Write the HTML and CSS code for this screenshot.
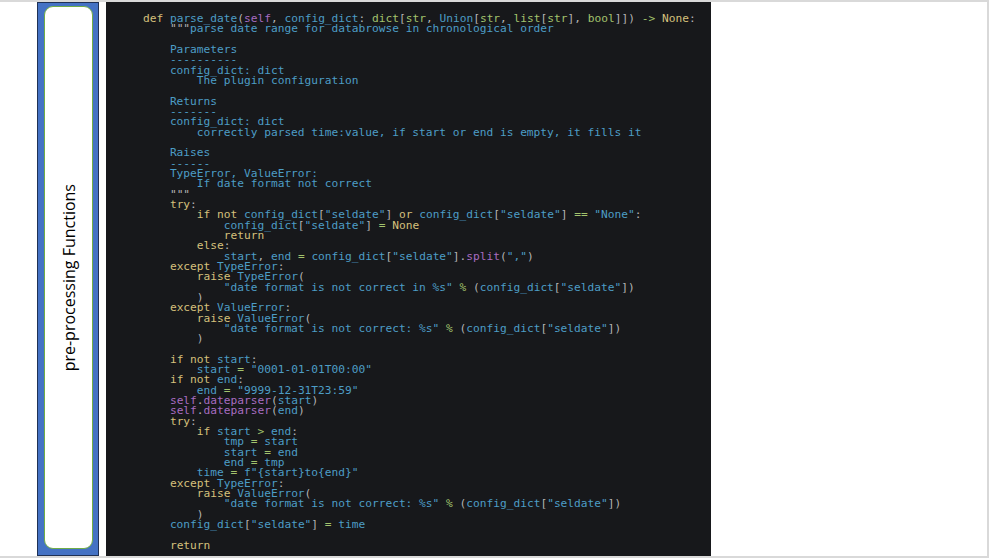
FILE: index.html
```html
<!DOCTYPE html>
<html>
<head>
<meta charset="utf-8">
<link rel="stylesheet" href="styles.css">
</head>
<body>
<div class="slide">
  <div class="side">
    <div class="side-inner">
      <span class="side-label">pre-processing Functions</span>
    </div>
  </div>
  <pre class="code"><code>    <span class="k">def</span> parse_date<span class="p">(</span><span class="s">self</span><span class="p">,</span> config_dict<span class="p">:</span> <span class="g">dict</span><span class="p">[</span><span class="g">str</span><span class="p">,</span> Union<span class="p">[</span><span class="g">str</span><span class="p">,</span> <span class="g">list</span><span class="p">[</span><span class="g">str</span><span class="p">],</span> <span class="g">bool</span><span class="p">]])</span> <span class="g">-&gt;</span> <span class="k">None</span><span class="p">:</span>
        <span class="p">"""</span>parse date range for databrowse in chronological order

        Parameters
        ----------
        config_dict: dict
            The plugin configuration

        Returns
        -------
        config_dict: dict
            correctly parsed time:value, if start or end is empty, it fills it

        Raises
        ------
        TypeError, ValueError:
            If date format not correct
        <span class="p">"""</span>
        <span class="k">try</span><span class="p">:</span>
            <span class="k">if not</span> config_dict<span class="p">[</span>"seldate"<span class="p">]</span> <span class="k">or</span> config_dict<span class="p">[</span>"seldate"<span class="p">]</span> <span class="g">==</span> "None"<span class="p">:</span>
                config_dict<span class="p">[</span>"seldate"<span class="p">]</span> <span class="g">=</span> <span class="k">None</span>
                <span class="k">return</span>
            <span class="k">else</span><span class="p">:</span>
                start<span class="p">,</span> end <span class="g">=</span> config_dict<span class="p">[</span>"seldate"<span class="p">].</span><span class="s">split</span><span class="p">(</span>","<span class="p">)</span>
        <span class="k">except</span> TypeError<span class="p">:</span>
            <span class="k">raise</span> TypeError<span class="p">(</span>
                "date format is not correct in %s" <span class="g">%</span> <span class="p">(</span>config_dict<span class="p">[</span>"seldate"<span class="p">])</span>
            <span class="p">)</span>
        <span class="k">except</span> ValueError<span class="p">:</span>
            <span class="k">raise</span> ValueError<span class="p">(</span>
                "date format is not correct: %s" <span class="g">%</span> <span class="p">(</span>config_dict<span class="p">[</span>"seldate"<span class="p">])</span>
            <span class="p">)</span>

        <span class="k">if not</span> start<span class="p">:</span>
            start <span class="g">=</span> "0001-01-01T00:00"
        <span class="k">if not</span> end<span class="p">:</span>
            end <span class="g">=</span> "9999-12-31T23:59"
        <span class="s">self</span><span class="p">.</span><span class="s">dateparser</span><span class="p">(</span>start<span class="p">)</span>
        <span class="s">self</span><span class="p">.</span><span class="s">dateparser</span><span class="p">(</span>end<span class="p">)</span>
        <span class="k">try</span><span class="p">:</span>
            <span class="k">if</span> start <span class="g">&gt;</span> end<span class="p">:</span>
                tmp <span class="g">=</span> start
                start <span class="g">=</span> end
                end <span class="g">=</span> tmp
            time <span class="g">=</span> f"{start}to{end}"
        <span class="k">except</span> TypeError<span class="p">:</span>
            <span class="k">raise</span> ValueError<span class="p">(</span>
                "date format is not correct: %s" <span class="g">%</span> <span class="p">(</span>config_dict<span class="p">[</span>"seldate"<span class="p">])</span>
            <span class="p">)</span>
        config_dict<span class="p">[</span>"seldate"<span class="p">]</span> <span class="g">=</span> time

        <span class="k">return</span></code></pre>
</div>
</body>
</html>
```

FILE: styles.css
```css
html, body {
  margin: 0;
  padding: 0;
  background: #ffffff;
}

.slide {
  box-sizing: border-box;
  width: 989px;
  height: 558px;
  border-top: 2px solid #d9d9d9;
  border-right: 2px solid #d9d9d9;
  border-bottom: 2px solid #d9d9d9;
  display: flex;
  align-items: stretch;
  padding-left: 37px;
  gap: 7px;
  background: #ffffff;
}

.side {
  box-sizing: border-box;
  width: 62px;
  background: #4472c4;
  border: 1px solid #1f3155;
  padding: 3px 5px 6px 6px;
  display: flex;
}

.side-inner {
  flex: 1;
  background: #ffffff;
  border: 1.5px solid #70ad47;
  border-radius: 9px;
  display: flex;
  align-items: center;
  justify-content: center;
}

.side-label {
  writing-mode: vertical-rl;
  transform: rotate(180deg);
  font-family: "Open Sans", "Liberation Sans", sans-serif;
  font-size: 16px;
  color: #000000;
  white-space: nowrap;
}

.code {
  margin: 0;
  width: 605px;
  box-sizing: border-box;
  background: #17181b;
  padding: 12px 0 0 10px;
  font-family: "DejaVu Sans Mono", monospace;
  font-size: 11.2px;
  line-height: 10.33px;
  color: #4d9dc6;
  white-space: pre;
  overflow: hidden;
}

.code code {
  font-family: inherit;
}

.k { color: #d5c07c; }
.g { color: #a3c36d; }
.p { color: #b4b4b4; }
.s { color: #a86cc0; }
```
